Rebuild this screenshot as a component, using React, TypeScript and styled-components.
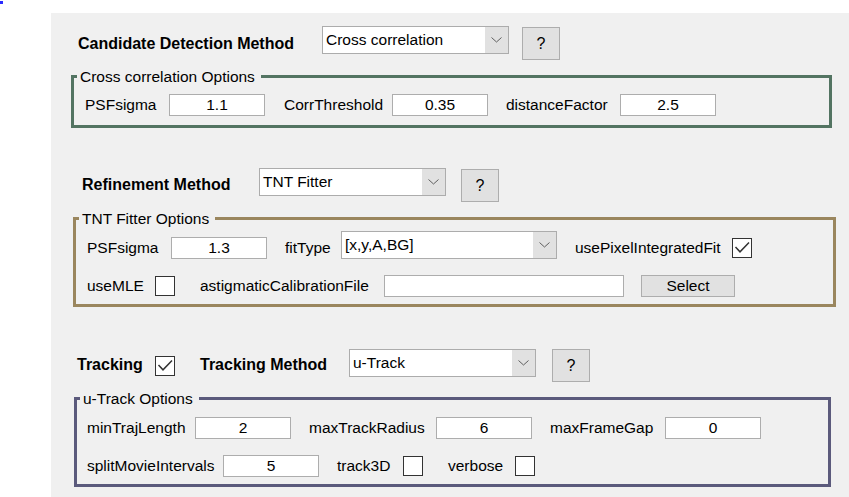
import React from 'react';
import styled, { createGlobalStyle } from 'styled-components';

const Global = createGlobalStyle`
  html, body { margin: 0; padding: 0; background: #ffffff; overflow: hidden; }
  body { font-family: "Liberation Sans", Arial, sans-serif; color: #000; }
  * { box-sizing: border-box; }
`;

const Page = styled.div`
  position: relative;
  width: 849px;
  height: 497px;
  padding: 13px 0 0 51px;
  overflow: hidden;
`;

const Marker = styled.span`
  position: absolute;
  left: 0;
  top: 1px;
  width: 3px;
  height: 3px;
  background: #2b2bff;
`;

const Panel = styled.div`
  background: #f0f0f0;
  width: 798px;
  height: 484px;
  padding-top: 13px;
  display: flex;
  flex-direction: column;
  align-items: flex-start;
`;

const Header = styled.div<{ $pl: number; $mt?: number }>`
  display: flex;
  align-items: flex-start;
  padding-left: ${(p) => p.$pl}px;
  margin-top: ${(p) => p.$mt ?? 0}px;
`;

const HeadLabel = styled.span<{ $w: number; $mt: number; $ml?: number }>`
  flex: none;
  width: ${(p) => p.$w}px;
  margin-top: ${(p) => p.$mt}px;
  margin-left: ${(p) => p.$ml ?? 0}px;
  font-size: 16px;
  font-weight: bold;
  line-height: 18px;
  white-space: nowrap;
`;

const Combo = styled.div<{ $w: number; $mt?: number }>`
  flex: none;
  display: flex;
  width: ${(p) => p.$w}px;
  height: 28px;
  margin-top: ${(p) => p.$mt ?? 0}px;
  border: 1px solid #acacac;
  background: #ffffff;
`;

const ComboValue = styled.span`
  flex: 1;
  padding-left: 3px;
  font-size: 15.5px;
  line-height: 26px;
  white-space: nowrap;
  overflow: hidden;
`;

const ComboArrow = styled.span`
  flex: none;
  width: 23px;
  background: #e1e1e1;
  display: flex;
  align-items: center;
  justify-content: center;
`;

const HelpButton = styled.div<{ $ml: number; $mt?: number }>`
  flex: none;
  width: 38px;
  height: 33px;
  margin-left: ${(p) => p.$ml}px;
  margin-top: ${(p) => p.$mt ?? 0}px;
  background: #e1e1e1;
  border: 1px solid #adadad;
  display: flex;
  align-items: center;
  justify-content: center;
  font-size: 16px;
`;

const Group = styled.fieldset<{ $color: string; $ml: number; $w: number; $mt: number }>`
  margin: ${(p) => p.$mt}px 0 0 ${(p) => p.$ml}px;
  width: ${(p) => p.$w}px;
  min-width: 0;
  padding: 0;
  border: 3px solid ${(p) => p.$color};
`;

const Legend = styled.legend`
  margin-left: 3px;
  padding: 0 6px 0 3px;
  font-size: 15.5px;
  line-height: 19px;
  white-space: nowrap;
`;

const GroupBody = styled.div<{ $pl: number; $pt: number; $pb: number }>`
  display: flex;
  flex-direction: column;
  gap: 16px;
  padding: ${(p) => p.$pt}px 0 ${(p) => p.$pb}px ${(p) => p.$pl}px;
`;

const Row = styled.div`
  display: flex;
  align-items: center;
`;

const Label = styled.span<{ $w: number; $ml?: number }>`
  flex: none;
  width: ${(p) => p.$w}px;
  margin-left: ${(p) => p.$ml ?? 0}px;
  font-size: 15.5px;
  line-height: 18px;
  white-space: nowrap;
`;

const TextBox = styled.div<{ $w?: number }>`
  flex: none;
  width: ${(p) => p.$w ?? 96}px;
  height: 22px;
  border: 1px solid #adadad;
  background: #ffffff;
  font-size: 15.5px;
  line-height: 20px;
  text-align: center;
`;

const Box = styled.div<{ $mt?: number }>`
  flex: none;
  width: 20px;
  height: 20px;
  margin-top: ${(p) => p.$mt ?? 0}px;
  border: 1px solid #333333;
  background: #ffffff;
  display: flex;
`;

const PushButton = styled.div<{ $ml: number; $w: number }>`
  flex: none;
  width: ${(p) => p.$w}px;
  height: 22px;
  margin-left: ${(p) => p.$ml}px;
  background: #e1e1e1;
  border: 1px solid #adadad;
  font-size: 15.5px;
  line-height: 20px;
  text-align: center;
`;

const Chevron = () => (
  <svg width="11" height="6" viewBox="0 0 11 6">
    <polyline points="0.5,0.5 5.5,5 10.5,0.5" fill="none" stroke="#5f5f5f" strokeWidth="1" />
  </svg>
);

const Select = ({ w, value, mt }: { w: number; value: string; mt?: number }) => (
  <Combo $w={w} $mt={mt}>
    <ComboValue>{value}</ComboValue>
    <ComboArrow>
      <Chevron />
    </ComboArrow>
  </Combo>
);

const Check = ({ checked, mt }: { checked?: boolean; mt?: number }) => (
  <Box $mt={mt}>
    {checked && (
      <svg width="18" height="18" viewBox="0 0 18 18">
        <polyline points="2.5,8 7,12.8 16,3.5" fill="none" stroke="#333333" strokeWidth="1.5" />
      </svg>
    )}
  </Box>
);

export default function App() {
  return (
    <>
      <Global />
      <Page>
        <Marker />
        <Panel>
          <Header $pl={27}>
            <HeadLabel $w={244} $mt={9}>Candidate Detection Method</HeadLabel>
            <Select w={187} value="Cross correlation" />
            <HelpButton $ml={13} $mt={1}>?</HelpButton>
          </Header>

          <Group $color="#537462" $ml={20} $w={761} $mt={7}>
            <Legend>Cross correlation Options</Legend>
            <GroupBody $pl={11} $pt={8} $pb={9}>
              <Row>
                <Label $w={84}>PSFsigma</Label>
                <TextBox>1.1</TextBox>
                <Label $w={108} $ml={19}>CorrThreshold</Label>
                <TextBox>0.35</TextBox>
                <Label $w={114} $ml={18}>distanceFactor</Label>
                <TextBox>2.5</TextBox>
              </Row>
            </GroupBody>
          </Group>

          <Header $pl={31} $mt={40}>
            <HeadLabel $w={177} $mt={8}>Refinement Method</HeadLabel>
            <Select w={187} value="TNT Fitter" />
            <HelpButton $ml={15} $mt={1}>?</HelpButton>
          </Header>

          <Group $color="#9a865e" $ml={22} $w={763} $mt={7}>
            <Legend>TNT Fitter Options</Legend>
            <GroupBody $pl={11} $pt={8} $pb={7}>
              <Row>
                <Label $w={84}>PSFsigma</Label>
                <TextBox>1.3</TextBox>
                <Label $w={56} $ml={18}>fitType</Label>
                <Select w={216} value="[x,y,A,BG]" mt={-5} />
                <Label $w={157} $ml={18}>usePixelIntegratedFit</Label>
                <Check checked />
              </Row>
              <Row>
                <Label $w={68}>useMLE</Label>
                <Check />
                <Label $w={184} $ml={25}>astigmaticCalibrationFile</Label>
                <TextBox $w={240} />
                <PushButton $ml={17} $w={94}>Select</PushButton>
              </Row>
            </GroupBody>
          </Group>

          <Header $pl={26} $mt={42}>
            <HeadLabel $w={78} $mt={7}>Tracking</HeadLabel>
            <Check checked mt={7} />
            <HeadLabel $w={149} $mt={7} $ml={25}>Tracking Method</HeadLabel>
            <Select w={187} value="u-Track" />
            <HelpButton $ml={16}>?</HelpButton>
          </Header>

          <Group $color="#5b5a7c" $ml={23} $w={757} $mt={7}>
            <Legend>u-Track Options</Legend>
            <GroupBody $pl={10} $pt={9} $pb={7}>
              <Row>
                <Label $w={108}>minTrajLength</Label>
                <TextBox>2</TextBox>
                <Label $w={127} $ml={18}>maxTrackRadius</Label>
                <TextBox>6</TextBox>
                <Label $w={115} $ml={18}>maxFrameGap</Label>
                <TextBox>0</TextBox>
              </Row>
              <Row>
                <Label $w={136}>splitMovieIntervals</Label>
                <TextBox>5</TextBox>
                <Label $w={66} $ml={18}>track3D</Label>
                <Check />
                <Label $w={67} $ml={25}>verbose</Label>
                <Check />
              </Row>
            </GroupBody>
          </Group>
        </Panel>
      </Page>
    </>
  );
}
